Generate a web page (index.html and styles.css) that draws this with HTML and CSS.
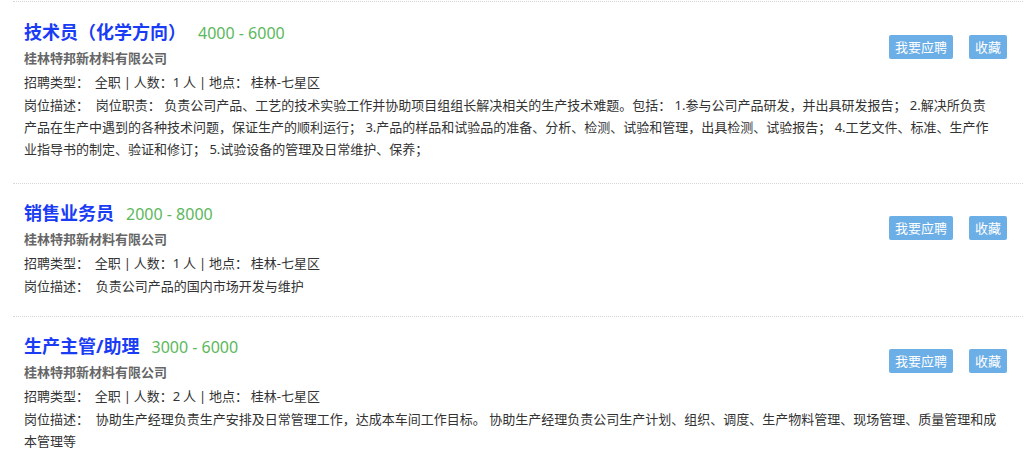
FILE: index.html
```html
<!DOCTYPE html>
<html lang="zh-CN">

<head>
    <meta charset="UTF-8">
    <meta name="viewport" content="width=device-width, initial-scale=1.0">
    <title>招聘信息</title>
    <link rel="stylesheet" href="styles.css">
</head>

<body>

    <div class="job-list">

        <div class="job-item">
            <div class="job-actions">
                <button class="btn">我要应聘</button>
                <button class="btn">收藏</button>
            </div>
            <h3 class="job-title">技术员（化学方向）<span class="salary">4000 - 6000</span></h3>
            <p class="company">桂林特邦新材料有限公司</p>
            <p class="info">招聘类型：&nbsp; 全职 | 人数：1 人 | 地点： 桂林-七星区</p>
            <p class="desc">岗位描述：&nbsp; 岗位职责： 负责公司产品、工艺的技术实验工作并协助项目组组长解决相关的生产技术难题。包括： 1.参与公司产品研发，并出具研发报告； 2.解决所负责产品在生产中遇到的各种技术问题，保证生产的顺利运行； 3.产品的样品和试验品的准备、分析、检测、试验和管理，出具检测、试验报告； 4.工艺文件、标准、生产作业指导书的制定、验证和修订； 5.试验设备的管理及日常维护、保养；</p>
        </div>

        <div class="job-item">
            <div class="job-actions">
                <button class="btn">我要应聘</button>
                <button class="btn">收藏</button>
            </div>
            <h3 class="job-title">销售业务员<span class="salary">2000 - 8000</span></h3>
            <p class="company">桂林特邦新材料有限公司</p>
            <p class="info">招聘类型：&nbsp; 全职 | 人数：1 人 | 地点： 桂林-七星区</p>
            <p class="desc">岗位描述：&nbsp; 负责公司产品的国内市场开发与维护</p>
        </div>

        <div class="job-item">
            <div class="job-actions">
                <button class="btn">我要应聘</button>
                <button class="btn">收藏</button>
            </div>
            <h3 class="job-title">生产主管/助理<span class="salary">3000 - 6000</span></h3>
            <p class="company">桂林特邦新材料有限公司</p>
            <p class="info">招聘类型：&nbsp; 全职 | 人数：2 人 | 地点： 桂林-七星区</p>
            <p class="desc">岗位描述：&nbsp; 协助生产经理负责生产安排及日常管理工作，达成本车间工作目标。 协助生产经理负责公司生产计划、组织、调度、生产物料管理、现场管理、质量管理和成本管理等</p>
        </div>

    </div>

</body>

</html>
```

FILE: styles.css
```css
body {
    margin: 0;
    padding: 0;
    background-color: #fff;
    font-family: "Noto Sans", "Noto Sans CJK SC", sans-serif;
    font-size: 13px;
    color: #333;
}

.job-list {
    margin: 1px 10px 0 13px;
}

.job-item {
    border-top: 1px dotted #d8d8d8;
    padding: 17px 25px 19px 11px;
}

/* o primeiro bloco tem um pouco mais de espaço embaixo */
.job-item:first-child {
    padding-top: 18px;
    padding-bottom: 23px;
}

.job-actions {
    float: right;
    margin-top: 15px;
    margin-right: -9px;
    display: flex;
    gap: 16px;
}

.btn {
    height: 24px;
    padding: 0 6px;
    border: none;
    border-radius: 2px;
    background-color: #6caee6;
    color: #fff;
    font-family: inherit;
    font-size: 13px;
    line-height: 24px;
    cursor: pointer;
}

.job-title {
    margin: 0 0 2px 0;
    font-size: 18px;
    line-height: 24px;
    font-weight: bold;
    color: #1a3cf5;
}

.salary {
    margin-left: 12px;
    font-size: 16px;
    font-weight: normal;
    color: #5cb85c;
}

.company {
    margin: 0;
    line-height: 23px;
    font-weight: bold;
    color: #666;
}

.info {
    margin: 0;
    line-height: 24px;
    word-spacing: -0.5px;
}

.desc {
    margin: 0;
    line-height: 22px;
}
```
